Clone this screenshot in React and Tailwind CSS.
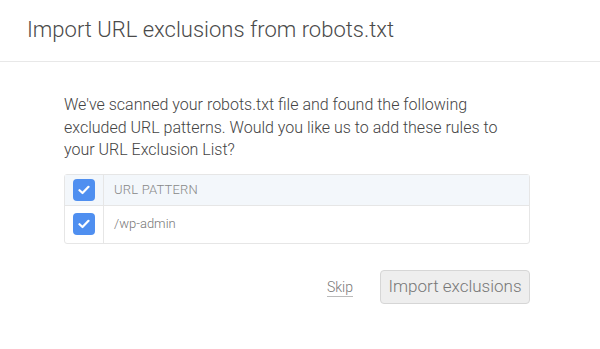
import React from "react";

function Check() {
  return (
    <div className="w-[22px] h-[22px] rounded-[4px] bg-[#4f8ff0] flex items-center justify-center">
      <svg width="12" height="10" viewBox="0 0 12 10" fill="none">
        <path d="M1.5 5.2 L4.5 8 L10.5 1.8" stroke="white" strokeWidth="2.2" strokeLinecap="round" strokeLinejoin="round" />
      </svg>
    </div>
  );
}

const light = "[font-family:Roboto,'Liberation_Sans',sans-serif] font-light";

export default function App() {
  return (
    <div className="w-[600px] h-[349px] bg-white text-[#333] [font-family:Roboto,'Liberation_Sans',sans-serif]">
      <div className="h-[62px] border-b border-[#e8e8e8] pl-[27px] pt-[15px]">
        <h1 className={"text-[22px] leading-[30px] text-[#4a4a4a] " + light}>Import URL exclusions from robots.txt</h1>
      </div>
      <div className="px-[64px] pt-[32px]">
        <p className={"text-[16px] leading-[22.5px] text-[#444] w-[440px] " + light}>
          We've scanned your robots.txt file and found the following excluded URL patterns. Would you like us to add these rules to your URL Exclusion List?
        </p>
        <div className="mt-[12px] w-[466px] border border-[#e6e6e6] rounded-[3px]">
          <div className="flex h-[31px] bg-[#f3f7fb] border-b border-[#e6e6e6]">
            <div className="w-[39px] border-r border-[#e6e6e6] flex items-center justify-center"><Check /></div>
            <div className={"flex items-center pl-[10px] text-[13px] text-[#888] tracking-[0.2px] " + light}>URL PATTERN</div>
          </div>
          <div className="flex h-[37px]">
            <div className="w-[39px] border-r border-[#e6e6e6] flex items-center justify-center"><Check /></div>
            <div className={"flex items-center pl-[10px] text-[13px] text-[#777] " + light}>/wp-admin</div>
          </div>
        </div>
        <div className="mt-[26px] flex justify-end items-center w-[466px] gap-[27px]">
          <span className={"text-[14px] text-[#777] border-b border-[#bbb] leading-[17px] mt-[2px] " + light}>Skip</span>
          <button className={"h-[34px] w-[150px] rounded-[4px] border border-[#d6d6d6] bg-[#eeeeee] text-[17px] text-[#777] " + light}>Import exclusions</button>
        </div>
      </div>
    </div>
  );
}
